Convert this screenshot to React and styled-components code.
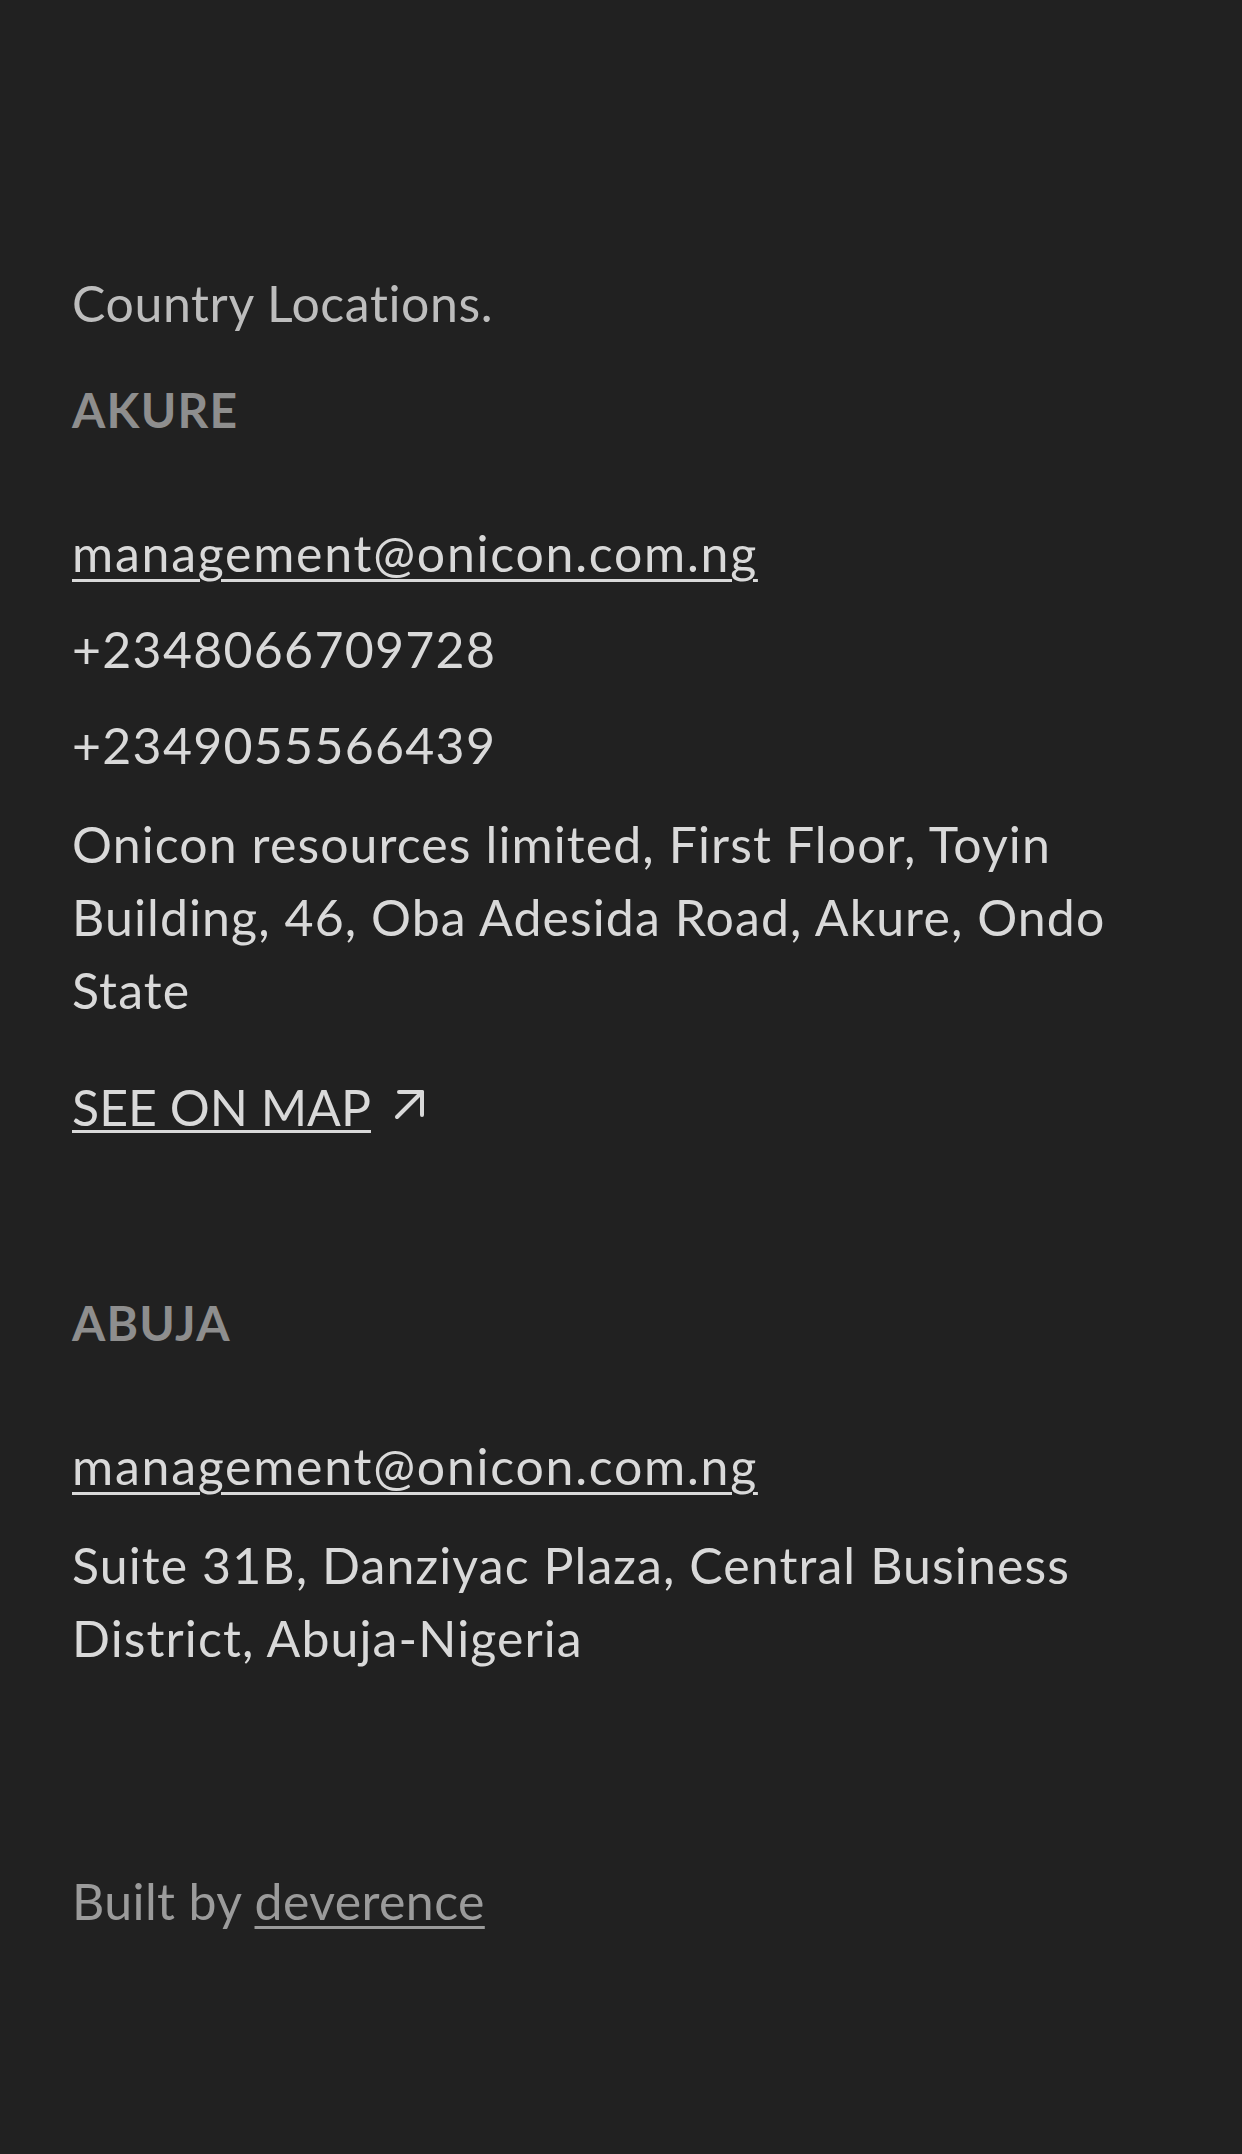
import React from "react";
import styled, { createGlobalStyle } from "styled-components";

const GlobalStyle = createGlobalStyle`
  html, body {
    margin: 0;
    padding: 0;
    background: #212121;
  }
  body {
    font-family: Lato, "Open Sans", "Noto Sans", sans-serif;
    -webkit-font-smoothing: antialiased;
  }
`;

const Page = styled.footer`
  box-sizing: border-box;
  width: 1242px;
  min-height: 2154px;
  background: #212121;
  padding: 267px 72px 220px;
  display: flex;
  flex-direction: column;
  color: #d9d9d9;
  font-size: 50px;
  line-height: 72px;
  letter-spacing: 1.3px;
`;

const Heading = styled.h2`
  margin: 0;
  font-size: 50px;
  line-height: 72px;
  font-weight: 400;
  letter-spacing: 0.6px;
  color: #bdbdbd;
`;

const City = styled.section`
  display: flex;
  flex-direction: column;
  margin-top: ${(p) => p.$offset}px;
`;

const CityTitle = styled.h3`
  margin: 0;
  font-size: 48px;
  line-height: 72px;
  font-weight: 700;
  letter-spacing: 1.2px;
  color: #8e8e8e;
  text-transform: uppercase;
`;

const ContactList = styled.div`
  display: flex;
  flex-direction: column;
  gap: 24px;
  margin-top: 71px;
`;

const Email = styled.a`
  color: #d9d9d9;
  letter-spacing: 1.75px;
  text-decoration: underline;
  text-decoration-thickness: 3px;
  text-underline-offset: 7px;
  align-self: flex-start;
`;

const Line = styled.div`
  color: #d9d9d9;
`;

const Address = styled.p`
  margin: 3px 0 0;
  line-height: 73px;
  color: #d9d9d9;
  letter-spacing: 1.1px;
`;

const MapLink = styled.a`
  margin-top: 44px;
  display: inline-flex;
  align-items: center;
  gap: 22px;
  align-self: flex-start;
  color: #d9d9d9;
  text-decoration: none;
`;

const MapText = styled.span`
  letter-spacing: 0;
  text-decoration: underline;
  text-decoration-thickness: 3px;
  text-underline-offset: 4px;
`;

const Arrow = styled.svg`
  width: 32px;
  height: 32px;
  margin-top: -6px;
  flex: none;
`;

const Credit = styled.div`
  margin-top: 190px;
  color: #9b9b9b;
  letter-spacing: 0.4px;
`;

const CreditLink = styled.a`
  color: #9b9b9b;
  text-decoration: underline;
  text-decoration-thickness: 3px;
  text-underline-offset: 6px;
`;

export default function App() {
  return (
    <>
      <GlobalStyle />
      <Page>
        <Heading>Country Locations.</Heading>
        <City $offset={35}>
          <CityTitle>Akure</CityTitle>
          <ContactList>
            <Email href="#">management@onicon.com.ng</Email>
            <Line>+2348066709728</Line>
            <Line>+2349055566439</Line>
            <Address>
              Onicon resources limited, First Floor, Toyin Building, 46, Oba
              Adesida Road, Akure, Ondo State
            </Address>
          </ContactList>
          <MapLink href="#">
            <MapText>SEE ON MAP</MapText>
            <Arrow viewBox="0 0 32 32" fill="none" stroke="#d9d9d9" strokeWidth="4" strokeLinecap="round" strokeLinejoin="round">
              <path d="M4 29 L29 4" />
              <path d="M6 4 H29 V27" />
            </Arrow>
          </MapLink>
        </City>
        <City $offset={144}>
          <CityTitle>Abuja</CityTitle>
          <ContactList>
            <Email href="#">management@onicon.com.ng</Email>
            <Address>
              Suite 31B, Danziyac Plaza, Central Business District,
              Abuja-Nigeria
            </Address>
          </ContactList>
        </City>
        <Credit>
          Built by <CreditLink href="#">deverence</CreditLink>
        </Credit>
      </Page>
    </>
  );
}
